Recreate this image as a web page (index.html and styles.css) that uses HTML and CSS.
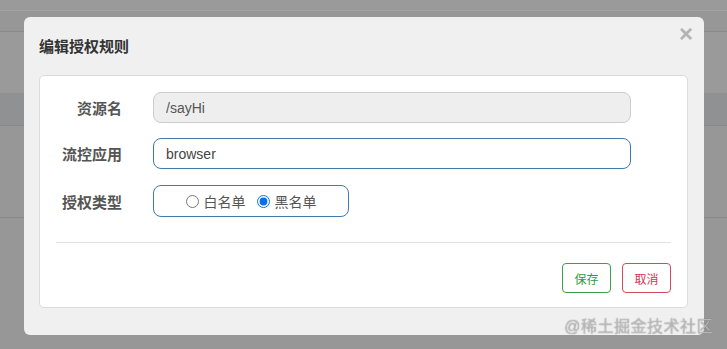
FILE: index.html
```html
<!DOCTYPE html>
<html lang="zh-CN">
<head>
  <meta charset="UTF-8">
  <meta name="viewport" content="width=device-width, initial-scale=1.0">
  <title>编辑授权规则</title>
  <link rel="stylesheet" href="styles.css">
</head>
<body>
  <div class="page">
    <div class="row row-top"></div>
    <div class="row row-head"></div>
    <div class="row row-body"></div>
    <div class="row row-dark"></div>
    <div class="row row-item"></div>
    <div class="row row-rest"></div>
  </div>

  <div class="modal">
    <div class="modal-header">
      <h4 class="modal-title">编辑授权规则</h4>
      <span class="close">&times;</span>
    </div>
    <div class="panel">
      <div class="form-row">
        <label class="form-label">资源名</label>
        <input class="form-input readonly" type="text" value="/sayHi" readonly>
      </div>
      <div class="form-row">
        <label class="form-label">流控应用</label>
        <input class="form-input active" type="text" value="browser">
      </div>
      <div class="form-row form-row-radio">
        <label class="form-label">授权类型</label>
        <div class="radio-box">
          <label class="radio"><input type="radio" name="strategy">白名单</label>
          <label class="radio"><input type="radio" name="strategy" checked>黑名单</label>
        </div>
      </div>
      <hr class="divider">
      <div class="actions">
        <button class="btn btn-save">保存</button>
        <button class="btn btn-cancel">取消</button>
      </div>
    </div>
  </div>

  <div class="watermark">@稀土掘金技术社区</div>
</body>
</html>
```

FILE: styles.css
```css
body {
  margin: 0;
  background-color: #979797;
  font-family: "Liberation Sans", "Noto Sans CJK SC", sans-serif;
  overflow: hidden;
}
.page {
  height: 349px;
}
.row { border-bottom: 1px solid #8a8a8a; }
.row-top { height: 10px; background: #9a9a9a; border-bottom-color: #a3a3a3; }
.row-head { height: 20px; }
.row-body { height: 61px; background: #9a9a9a; border-bottom: none; }
.row-dark { height: 32px; background: #8f9193; }
.row-item { height: 91px; }
.row-rest { border-bottom: none; }

.modal {
  position: fixed;
  top: 17px;
  left: 24px;
  width: 680px;
  height: 318px;
  box-sizing: border-box;
  background: #f0f0f0;
  border-radius: 6px;
  padding: 0 16px 0 15px;
}
.modal-header {
  height: 58px;
  display: flex;
  justify-content: space-between;
  align-items: flex-start;
}
.modal-title {
  margin: 18px 0 0;
  font-size: 15px;
  font-weight: bold;
  color: #333;
}
.close {
  margin: 5px -5px 0 0;
  font-size: 24px;
  font-weight: bold;
  color: #b3b3b3;
  line-height: 24px;
}
.panel {
  background: #fff;
  border: 1px solid #dcdcdc;
  border-radius: 5px;
  padding: 16px 16px 14px 16px;
}
.form-row {
  display: grid;
  grid-template-columns: 66px auto;
  column-gap: 31px;
  align-items: center;
  margin-bottom: 15px;
}
.form-row-radio {
  margin-top: 16px;
}
.form-label {
  text-align: right;
  font-size: 15px;
  font-weight: bold;
  color: #555;
}
.form-input {
  width: 478px;
  height: 31px;
  box-sizing: border-box;
  padding: 0 12px;
  border-radius: 8px;
  font-family: inherit;
  font-size: 14px;
  outline: none;
}
.readonly {
  background: #eee;
  border: 1px solid #ccc;
  color: #555;
}
.active {
  background: #fff;
  border: 1px solid #3f7ab0;
  color: #444;
}
.radio-box {
  width: 196px;
  height: 32px;
  box-sizing: border-box;
  border: 1px solid #3f7ab0;
  border-radius: 8px;
  display: flex;
  justify-content: center;
  align-items: center;
  gap: 11px;
}
.radio {
  font-size: 14px;
  color: #555;
  display: flex;
  align-items: center;
}
.radio input {
  margin: 0 5px 0 0;
  width: 13px;
  height: 13px;
  accent-color: #0b6fe8;
}
.divider {
  border: none;
  border-top: 1px solid #e2e2e2;
  margin: 25px 0 20px;
}
.actions {
  display: flex;
  justify-content: flex-end;
  gap: 11px;
}
.btn {
  width: 49px;
  height: 30px;
  background: #fff;
  border-radius: 4px;
  font-family: inherit;
  font-size: 12px;
  cursor: pointer;
}
.btn-save { border: 1px solid #3d9e4c; color: #2f9a40; }
.btn-cancel { border: 1px solid #d34a5e; color: #d2324f; }

.watermark {
  position: fixed;
  right: 14px;
  bottom: 12px;
  font-size: 16px;
  color: rgba(255, 255, 255, 0.55);
  text-shadow: 0 0 1px #555;
  letter-spacing: 0.5px;
}
```
